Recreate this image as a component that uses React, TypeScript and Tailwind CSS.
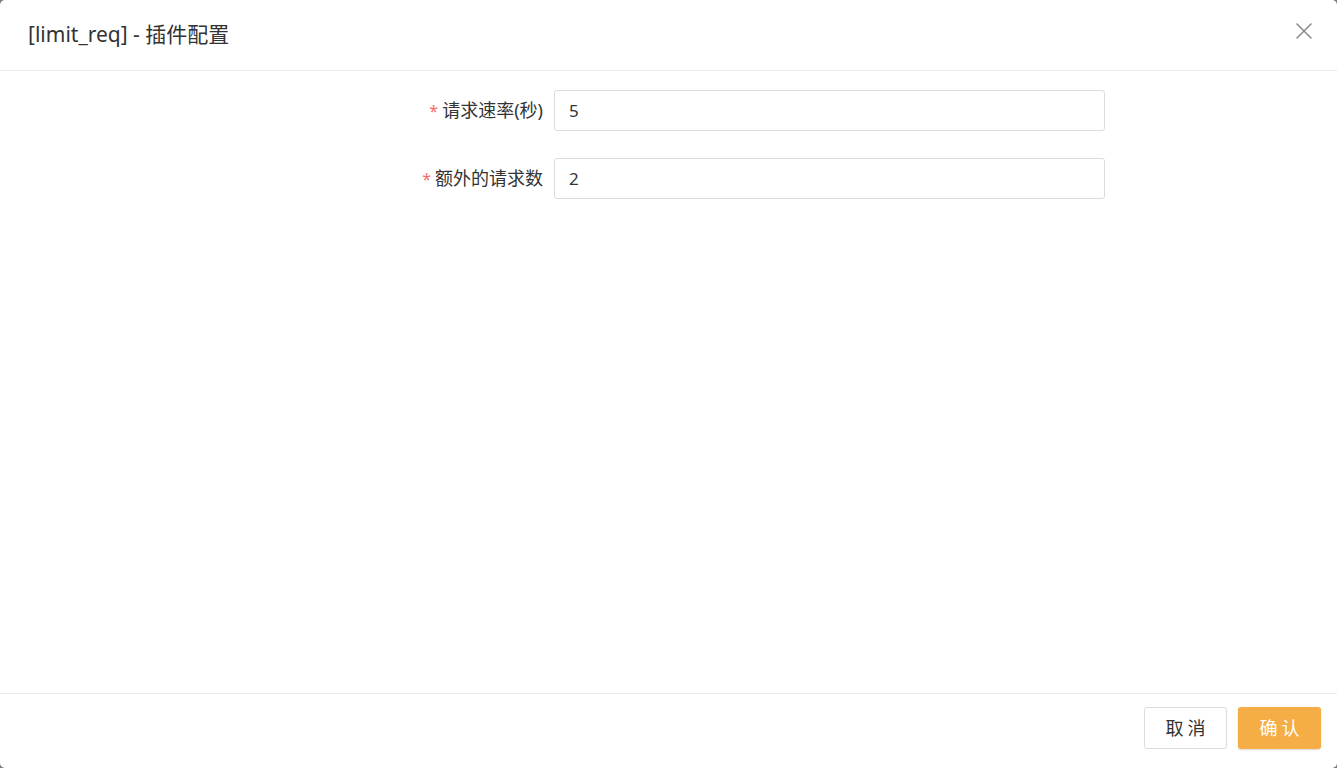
const fields = [
  { label: "请求速率(秒)", value: "5" },
  { label: "额外的请求数", value: "2" },
];

export default function App() {
  return (
    <div
      className="w-full h-screen bg-[#7a7a7a] text-[#333]"
      style={{ fontFamily: '"Noto Sans", "Noto Sans CJK SC", sans-serif' }}
    >
      <div className="w-full h-full bg-white rounded-[5px] flex flex-col overflow-hidden">
        <div className="h-[71px] shrink-0 border-b border-[#ebebeb] flex items-center justify-between pl-[28px] pr-[26px]">
          <h2 className="text-[21px] font-normal text-[#333]">[limit_req] - 插件配置</h2>
          <svg width="16" height="16" viewBox="0 0 16 16" className="-mt-[9px] -mr-[1px]">
            <path d="M1 1L15 15M15 1L1 15" stroke="#888" strokeWidth="1.5" strokeLinecap="round" />
          </svg>
        </div>

        <div className="flex-1 pt-[19px] pl-[400px]">
          <div className="flex flex-col gap-[27px]">
            {fields.map((f) => (
              <div key={f.label} className="flex items-center">
                <label className="w-[154px] pr-[11px] text-right text-[18px] text-[#333]">
                  <span className="text-[#f56c6c] text-[16px] mr-[4px]">*</span>
                  {f.label}
                </label>
                <input
                  readOnly
                  value={f.value}
                  className="w-[551px] h-[41px] border border-[#dcdcdc] rounded-[3px] px-[14px] text-[17px] text-[#333] outline-none"
                />
              </div>
            ))}
          </div>
        </div>

        <div className="h-[75px] shrink-0 border-t border-[#ebebeb] flex items-start justify-end gap-[11px] pt-[13px] pr-[16px]">
          <button className="w-[83px] h-[42px] border border-[#dcdcdc] rounded-[3px] bg-white text-[18px] tracking-[4px] pl-[4px] text-[#333]">
            取消
          </button>
          <button className="w-[83px] h-[42px] rounded-[3px] bg-[#f5ad45] text-[18px] tracking-[4px] pl-[4px] text-white shadow-[0_1px_2px_rgba(0,0,0,0.15)]">
            确认
          </button>
        </div>
      </div>
    </div>
  );
}
